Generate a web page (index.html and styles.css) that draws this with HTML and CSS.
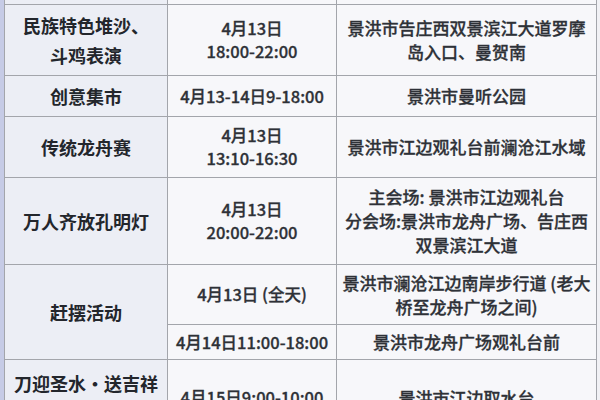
FILE: index.html
```html
<!DOCTYPE html>
<html lang="zh">
<head>
<meta charset="utf-8">
<link rel="stylesheet" href="styles.css">
</head>
<body>
<div class="page">
  <div class="edge"></div>
  <table class="sched">
    <colgroup>
      <col class="c1"><col class="c2"><col class="c3">
    </colgroup>
    <tr class="r0"><td class="name"></td><td></td><td></td></tr>
    <tr class="r1">
      <td class="name">民族特色堆沙、<br>斗鸡表演</td>
      <td class="time">4月13日<br>18:00-22:00</td>
      <td class="place">景洪市告庄西双景滨江大道罗摩<br>岛入口、曼贺南</td>
    </tr>
    <tr class="r2">
      <td class="name">创意集市</td>
      <td class="time">4月13-14日9-18:00</td>
      <td class="place">景洪市曼听公园</td>
    </tr>
    <tr class="r3">
      <td class="name">传统龙舟赛</td>
      <td class="time">4月13日<br>13:10-16:30</td>
      <td class="place">景洪市江边观礼台前澜沧江水域</td>
    </tr>
    <tr class="r4">
      <td class="name">万人齐放孔明灯</td>
      <td class="time">4月13日<br>20:00-22:00</td>
      <td class="place">主会场: 景洪市江边观礼台<br>分会场:景洪市龙舟广场、告庄西<br>双景滨江大道</td>
    </tr>
    <tr class="r5a">
      <td class="name" rowspan="2">赶摆活动</td>
      <td class="time">4月13日 (全天)</td>
      <td class="place">景洪市澜沧江边南岸步行道 (老大<br>桥至龙舟广场之间)</td>
    </tr>
    <tr class="r5b">
      <td class="time">4月14日11:00-18:00</td>
      <td class="place">景洪市龙舟广场观礼台前</td>
    </tr>
    <tr class="r6">
      <td class="name">刀迎圣水·送吉祥<br>福</td>
      <td class="time">4月15日9:00-10:00</td>
      <td class="place">景洪市江边取水台</td>
    </tr>
  </table>
  <div class="side"></div>
</div>
</body>
</html>
```

FILE: styles.css
```css
html, body {
  margin: 0;
  padding: 0;
  width: 600px;
  height: 400px;
  overflow: hidden;
  background: #f3f3f7;
}
.page {
  display: flex;
  align-items: flex-start;
  width: 600px;
}
.edge {
  width: 4px;
  height: 400px;
  flex: none;
  background: #c6cbe6;
}
.side {
  flex: 1;
  height: 400px;
  background: #f1f1f5;
}
.sched {
  flex: none;
  width: 592px;
  table-layout: fixed;
  border-collapse: collapse;
  font-family: "Noto Sans CJK SC", "Noto Sans", sans-serif;
  color: #2e3137;
}
.c1 { width: 163px; }
.c2 { width: 169px; }
.c3 { width: 260px; }
.sched td {
  border: 1.5px solid #a3a5ab;
  background: #f7f7fa;
  text-align: center;
  vertical-align: middle;
  padding: 0 1px;
  white-space: nowrap;
}
.sched td.name {
  background: #eceef5;
  color: #23262c;
  font-size: 18px;
  font-weight: 700;
  line-height: 30px;
}
.sched td.time {
  font-size: 16.5px;
  font-weight: 500;
  line-height: 23px;
  -webkit-text-stroke: 0.3px #2e3137;
}
.sched td.place {
  font-size: 17px;
  font-weight: 500;
  line-height: 24px;
  -webkit-text-stroke: 0.3px #2e3137;
}
.r0 td { border-top: none; height: 4px; padding: 0; }
.r1 { height: 71px; }
.r2 { height: 41px; }
.r3 { height: 61px; }
.r4 { height: 87px; }
.r5a { height: 60px; }
.r5b { height: 35px; }
.r6 { height: 76px; }
```
